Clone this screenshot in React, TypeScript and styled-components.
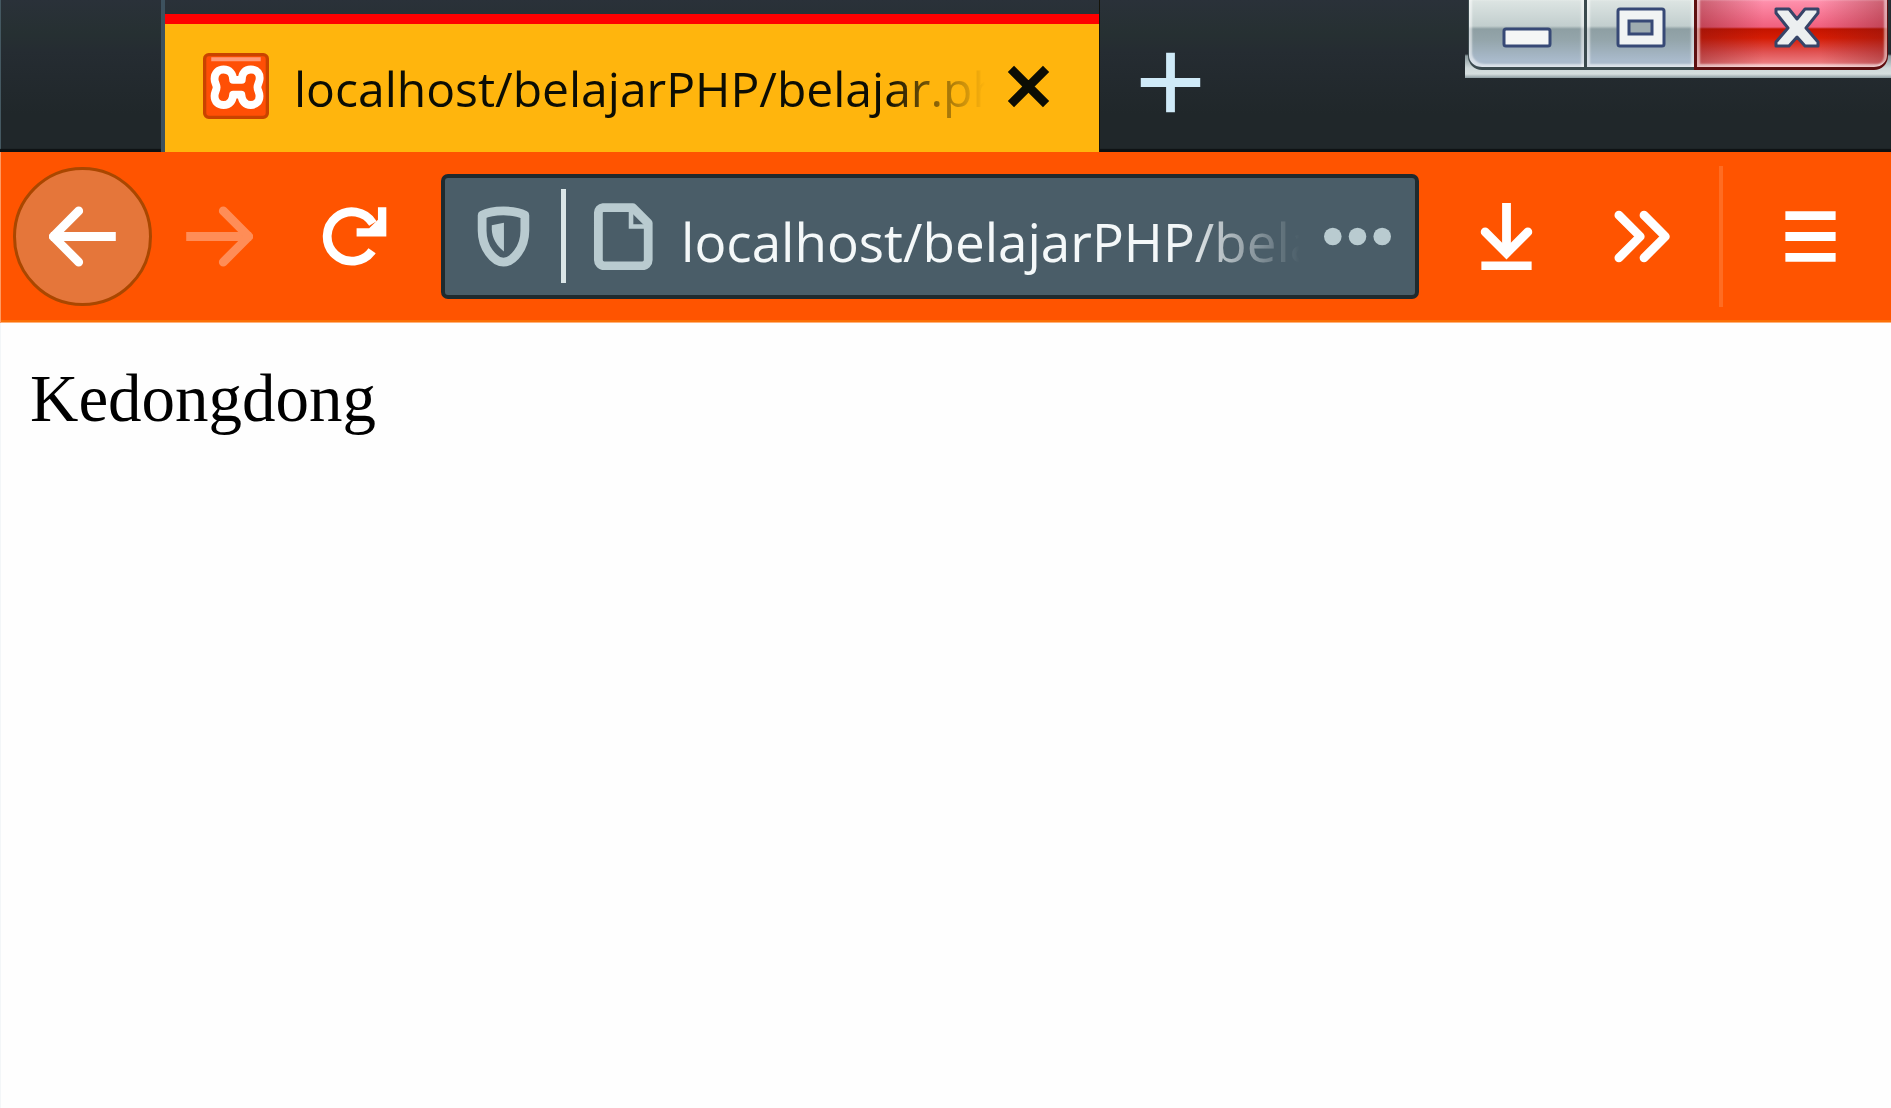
import React from 'react';
import styled, { createGlobalStyle } from 'styled-components';

const GlobalStyle = createGlobalStyle`
  *, *::before, *::after { box-sizing: border-box; }
  body { margin: 0; background: #fefefe; }
  button, input { font: inherit; color: inherit; margin: 0; padding: 0; border: 0; background: none; }
  svg { display: block; flex: none; }
`;

const uiFont = `'Open Sans', 'Noto Sans', sans-serif`;

const BrowserWindow = styled.div`
  display: flex;
  flex-direction: column;
  min-height: 100vh;
  font-family: ${uiFont};
`;

const TitleBar = styled.header`
  display: flex;
  align-items: flex-start;
  height: 152px;
  padding-left: 161px;
  background: linear-gradient(#2a3139, #263032 22%, #252c32 34%, #20272a 75%, #20272a);
  box-shadow: inset 0 -3px 1px #0d1112, inset 1px 0 #4b616b;
`;

const Tab = styled.div`
  flex: 0 1 939px;
  min-width: 0;
  height: 152px;
  padding-top: 14px;
  border-left: 4px solid #3d515e;
  border-right: 1px solid #15140a;
`;

const TabBody = styled.div`
  display: flex;
  align-items: center;
  height: 138px;
  padding: 0 37px 4px 38px;
  border-top: 10px solid #fe0000;
  background: #ffb50d;
`;

const TabTitle = styled.span`
  flex: 1;
  min-width: 0;
  margin: 0 10px 0 25px;
  padding-top: 6px;
  overflow: hidden;
  white-space: nowrap;
  font-size: 48px;
  font-weight: 500;
  line-height: 66px;
  color: #0c0d04;
  mask-image: linear-gradient(to left, transparent, #000 100px);
`;

const TabClose = styled.button`
  display: flex;
  align-items: center;
  justify-content: center;
  width: 67px;
  height: 67px;
  color: #0c0d04;
`;

const NewTab = styled.button`
  display: flex;
  align-items: center;
  justify-content: center;
  width: 140px;
  height: 152px;
  padding-top: 12px;
  color: #cfeaf8;
`;

const WindowControls = styled.div`
  display: flex;
  flex: none;
  width: 426px;
  height: 78px;
  margin-left: auto;
  padding: 0 3px 8px 3px;
  background: linear-gradient(to bottom, transparent 54px, #8b9a9e 56px, #cfd9da 68px, #d6dfdf 74px, #8d9da1);
`;

const CaptionButton = styled.button<{ $kind: 'minimize' | 'maximize' | 'close' }>`
  display: flex;
  align-items: flex-start;
  justify-content: center;
  flex: ${p => (p.$kind === 'close' ? '0 0 194px' : p.$kind === 'maximize' ? '0 0 110px' : '1 1 0')};
  height: 70px;
  padding-left: ${p => (p.$kind === 'close' ? '10px' : '0')};
  border: 3px solid ${p => (p.$kind === 'close' ? '#5e0f10' : '#3b4a4e')};
  border-top: 0;
  border-left-width: ${p => (p.$kind === 'minimize' ? '1px' : '3px')};
  border-right-width: ${p => (p.$kind === 'close' ? '1px' : '0')};
  border-radius: ${p => (p.$kind === 'minimize' ? '0 0 0 14px' : p.$kind === 'close' ? '0 0 14px 0' : '0')};
  background: ${p =>
    p.$kind === 'close'
      ? `linear-gradient(to right, rgba(120, 20, 20, .4), transparent 35%, transparent 65%, rgba(120, 20, 20, .4)),
         linear-gradient(#ff92ae, #f0607e 27px, #c41400 29px, #d51c04 38px, #e05252 52px, #f08a90)`
      : 'linear-gradient(#dde5e3, #c2cece 26px, #8e9fa3 29px, #94a5ab 40px, #a9bacb 60px)'};
  box-shadow: inset 3px -3px 2px rgba(255, 255, 255, .55), inset -3px 0 2px rgba(255, 255, 255, .5);
`;

const Toolbar = styled.nav`
  display: flex;
  align-items: center;
  height: 171px;
  padding: 0 13px 3px;
  background: #ff5400;
  box-shadow: inset 1px 0 #ff9a62, inset 0 -1px #ffb27a, inset 0 -3px #fb6f06;
  color: #fff;
`;

const ToolButton = styled.button<{ $dim?: boolean; $round?: boolean }>`
  display: flex;
  align-items: center;
  justify-content: center;
  flex: none;
  width: ${p => (p.$round ? 139 : 135)}px;
  height: 139px;
  border-radius: ${p => (p.$round ? '50%' : '0')};
  border: ${p => (p.$round ? '3px solid #aa4700' : '0')};
  background: ${p => (p.$round ? '#e5763a' : 'none')};
  color: ${p => (p.$dim ? '#ff8d57' : '#fff')};
`;

const AddressBar = styled.div`
  display: flex;
  align-items: center;
  flex: 1;
  min-width: 0;
  height: 125px;
  margin: 0 20px 0 19px;
  padding: 0 24px 0 25px;
  border: 4px solid #1f2a2e;
  border-radius: 7px;
  background: #4a5d68;
  color: #b9cbd0;
`;

const AddressButton = styled.button`
  display: flex;
  flex: none;
`;

const AddressDivider = styled.span`
  flex: none;
  width: 5px;
  height: 94px;
  margin: 0 24px;
  background: #dbe6e8;
`;

const AddressInput = styled.input`
  flex: 1;
  min-width: 0;
  height: 84px;
  margin: 0 24px;
  padding-top: 10px;
  outline: 0;
  font-size: 53px;
  line-height: 74px;
  color: #f4f8f9;
  mask-image: linear-gradient(to left, transparent, #000 120px);
`;

const ToolbarDivider = styled.span`
  flex: none;
  width: 4px;
  height: 141px;
  margin: 0 20px 0 10px;
  background: #ff6c22;
`;

const Page = styled.main`
  flex: 1;
  padding: 37px 29px;
  border-left: 1px solid #f3f6f8;
  background: #fefefe;
  color: #000;
  font-family: 'Liberation Serif', 'Times New Roman', serif;
  font-size: 67px;
  line-height: 76px;
`;

const Icon = ({ children, size = 67 }: { children: React.ReactNode; size?: number }) => (
  <svg width={size} height={size} viewBox="0 0 16 16" fill="none" stroke="currentColor" strokeWidth="2.1" aria-hidden="true">
    {children}
  </svg>
);

const Favicon = () => (
  <svg width="66" height="66" viewBox="0 0 16 16" aria-hidden="true">
    <rect x=".4" y=".4" width="15.2" height="15.2" rx="1" fill="#ff4f05" stroke="#c94300" strokeWidth=".8" />
    <path d="M2 1.5H14" stroke="#ff9a78" strokeWidth="1" />
    <path
      d="M7.3 6.5H9.4C9.4 5 10.2 4 11.6 4C13.2 4 13.9 5.1 13.7 6.5C13.6 7.2 13.2 7.6 13.2 8.3C13.2 9 13.7 9.5 13.7 10.4C13.7 11.8 12.8 12.6 11.6 12.6C10.2 12.6 9.4 11.7 9.3 10.1H7.3C7.2 11.7 6.4 12.6 5 12.6C3.7 12.6 2.8 11.8 2.8 10.4C2.8 9.5 3.3 9 3.3 8.3C3.3 7.6 2.8 7.2 2.8 6.3C2.8 4.9 3.7 4 5 4C6.4 4 7.3 5 7.3 6.5Z"
      fill="none"
      stroke="#fff"
      strokeWidth="1.9"
      strokeLinejoin="round"
    />
  </svg>
);

const MinimizeGlyph = () => (
  <svg width="50" height="60" viewBox="0 0 50 60" aria-hidden="true">
    <rect x="2" y="29" width="46" height="17" rx="2" fill="#f5f6f6" stroke="#374976" strokeWidth="3" />
  </svg>
);

const MaximizeGlyph = () => (
  <svg width="50" height="60" viewBox="0 0 50 60" aria-hidden="true">
    <rect x="2" y="9" width="46" height="37" rx="2" fill="#f1f4f4" stroke="#374976" strokeWidth="3" />
    <rect x="13" y="21" width="23" height="13" fill="#9eacb0" stroke="#374976" strokeWidth="3" />
  </svg>
);

const CloseGlyph = () => (
  <svg width="50" height="60" viewBox="0 0 50 60" aria-hidden="true">
    <path
      d="M4 9H17L25 19L33 9H46V13L34 28L46 42V46H33L25 37L17 46H4V42L16 28L4 13Z"
      fill="#eceff0"
      stroke="#374468"
      strokeWidth="3"
      strokeLinejoin="round"
    />
  </svg>
);

export default function App() {
  return (
    <BrowserWindow>
      <GlobalStyle />
      <TitleBar>
        <Tab>
          <TabBody>
            <Favicon />
            <TabTitle>localhost/belajarPHP/belajar.php</TabTitle>
            <TabClose aria-label="Close tab">
              <Icon><path d="M3.8 3.8L12.2 12.2M12.2 3.8L3.8 12.2" /></Icon>
            </TabClose>
          </TabBody>
        </Tab>
        <NewTab aria-label="New tab">
          <Icon><path d="M8 .9V15.1M.9 8H15.1" /></Icon>
        </NewTab>
        <WindowControls>
          <CaptionButton $kind="minimize" aria-label="Minimize"><MinimizeGlyph /></CaptionButton>
          <CaptionButton $kind="maximize" aria-label="Maximize"><MaximizeGlyph /></CaptionButton>
          <CaptionButton $kind="close" aria-label="Close window"><CloseGlyph /></CaptionButton>
        </WindowControls>
      </TitleBar>
      <Toolbar>
        <ToolButton $round aria-label="Back">
          <Icon>
            <path d="M14.9 8H1.5" strokeLinecap="square" />
            <path d="M7.1 1.9L1 8L7.1 14.1" strokeLinecap="round" strokeLinejoin="round" />
          </Icon>
        </ToolButton>
        <ToolButton $dim aria-label="Forward">
          <Icon>
            <path d="M1.1 8H14.5" strokeLinecap="square" />
            <path d="M8.9 1.9L15 8L8.9 14.1" strokeLinecap="round" strokeLinejoin="round" />
          </Icon>
        </ToolButton>
        <ToolButton aria-label="Reload">
          <Icon>
            <path d="M12.4 4.9A5.9 5.9 0 1 0 12.2 11.4" />
            <path d="M13.6 1H15.6V8H8.5V6H11.5L13.6 4Z" fill="currentColor" stroke="none" />
          </Icon>
        </ToolButton>
        <AddressBar>
          <AddressButton aria-label="Tracking protection">
            <Icon>
              <path d="M8 1.9C10 1.9 12 2.3 13.1 2.9V6.6C13.1 10.6 10.4 14.1 8 14.1C5.6 14.1 2.9 10.6 2.9 6.6V2.9C4 2.3 6 1.9 8 1.9Z" strokeLinejoin="round" />
              <path d="M8.1 4.7V11.6C6.4 10.3 5.3 8.4 5.2 6.4V5.3Z" fill="currentColor" stroke="none" />
            </Icon>
          </AddressButton>
          <AddressDivider />
          <AddressButton aria-label="Site information">
            <Icon>
              <path d="M3.1 1.1H10.2L13.9 4.8V13.6A1.4 1.4 0 0 1 12.5 15H3.4A1.4 1.4 0 0 1 2 13.6V2.3A1.2 1.2 0 0 1 3.1 1.1Z" strokeLinejoin="round" />
              <path d="M9.8 1.5V5.6H14" strokeWidth="1.1" />
            </Icon>
          </AddressButton>
          <AddressInput aria-label="Address" defaultValue="localhost/belajarPHP/belajar.php" />
          <AddressButton aria-label="Page actions">
            <Icon>
              <g fill="currentColor" stroke="none">
                <circle cx="2.1" cy="8" r="2.1" />
                <circle cx="8" cy="8" r="2.1" />
                <circle cx="13.9" cy="8" r="2.1" />
              </g>
            </Icon>
          </AddressButton>
        </AddressBar>
        <ToolButton aria-label="Downloads">
          <Icon>
            <path d="M8 0V12M2 15H14" />
            <path d="M2.9 6.9L8 12L13.1 6.9" strokeLinecap="round" />
          </Icon>
        </ToolButton>
        <ToolButton aria-label="More tools">
          <Icon>
            <path d="M2.6 2.9L7.7 8L2.6 13.1M8.6 2.9L13.7 8L8.6 13.1" strokeLinecap="round" strokeLinejoin="round" />
          </Icon>
        </ToolButton>
        <ToolbarDivider />
        <ToolButton aria-label="Open menu">
          <Icon><path d="M2 3H14M2 8H14M2 13H14" /></Icon>
        </ToolButton>
      </Toolbar>
      <Page>Kedongdong</Page>
    </BrowserWindow>
  );
}
